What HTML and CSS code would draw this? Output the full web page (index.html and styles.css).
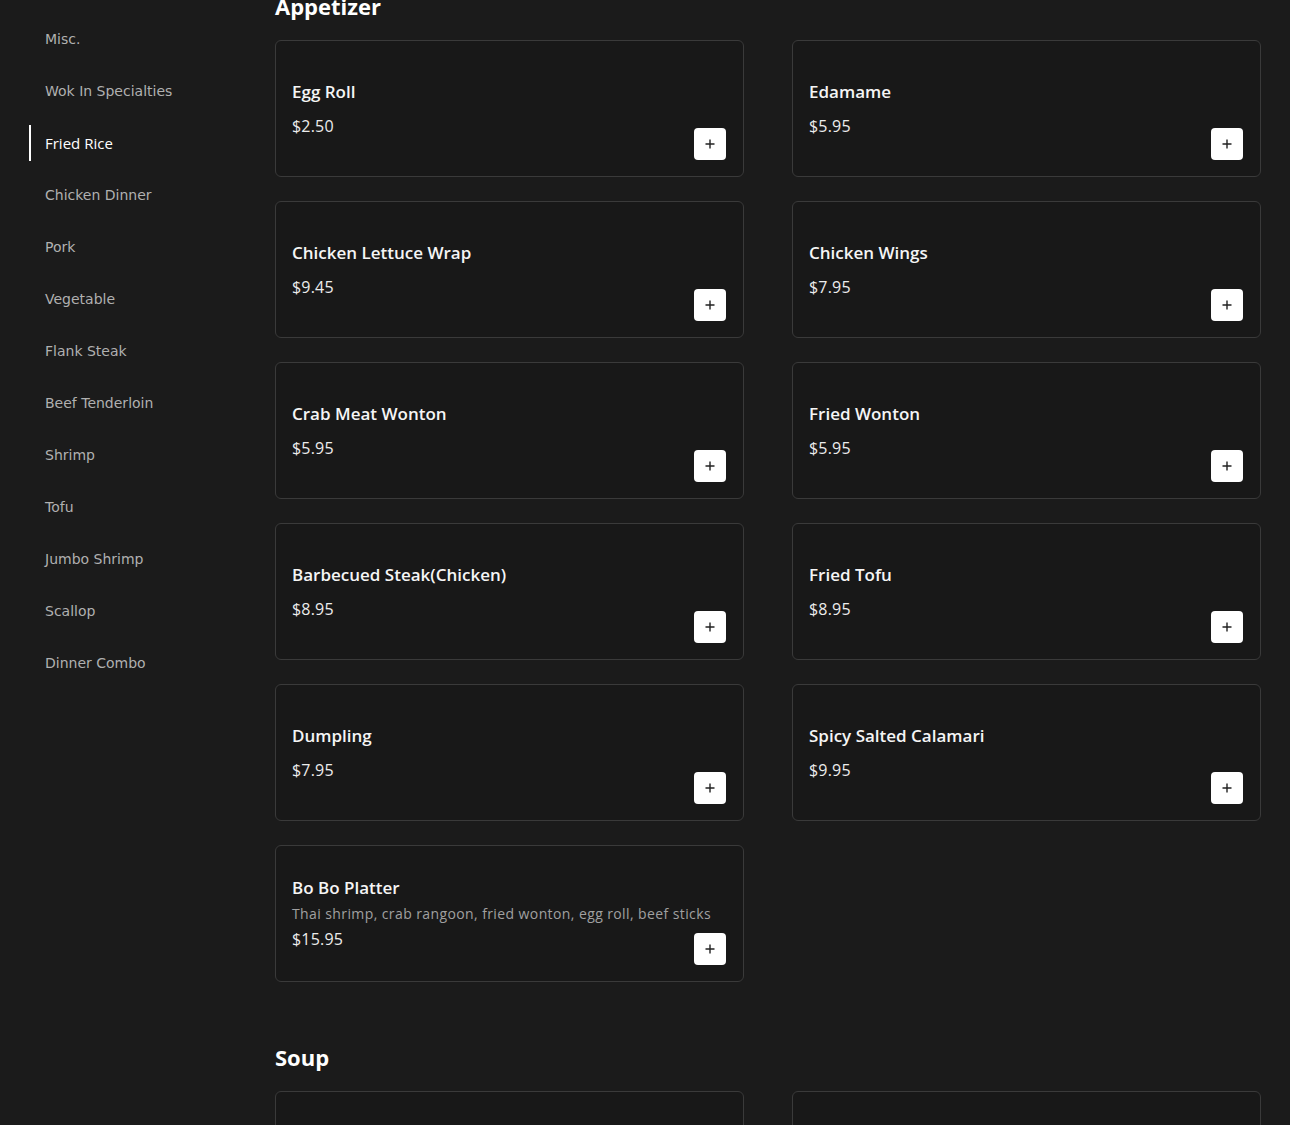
FILE: index.html
```html
<!DOCTYPE html>
<html lang="en">
<head>
  <meta charset="UTF-8">
  <title>Menu</title>
  <meta name="viewport" content="width=device-width, initial-scale=1.0">
  <link rel="stylesheet" href="styles.css">
</head>
<body>
  <div class="layout">
    <aside class="sidebar">
      <ul class="cats">
        <li><a href="#">Misc.</a></li>
        <li><a href="#">Wok In Specialties</a></li>
        <li class="active"><a href="#">Fried Rice</a></li>
        <li><a href="#">Chicken Dinner</a></li>
        <li><a href="#">Pork</a></li>
        <li><a href="#">Vegetable</a></li>
        <li><a href="#">Flank Steak</a></li>
        <li><a href="#">Beef Tenderloin</a></li>
        <li><a href="#">Shrimp</a></li>
        <li><a href="#">Tofu</a></li>
        <li><a href="#">Jumbo Shrimp</a></li>
        <li><a href="#">Scallop</a></li>
        <li><a href="#">Dinner Combo</a></li>
      </ul>
    </aside>

    <main class="menu">
      <section class="section">
        <h2>Appetizer</h2>
        <div class="grid">
          <div class="card">
            <div class="info"><h3>Egg Roll</h3><p class="price">$2.50</p></div>
            <button class="add"><svg viewBox="0 0 12 12" width="12" height="12"><path d="M6 1.5v9M1.5 6h9"/></svg></button>
          </div>
          <div class="card">
            <div class="info"><h3>Edamame</h3><p class="price">$5.95</p></div>
            <button class="add"><svg viewBox="0 0 12 12" width="12" height="12"><path d="M6 1.5v9M1.5 6h9"/></svg></button>
          </div>
          <div class="card">
            <div class="info"><h3>Chicken Lettuce Wrap</h3><p class="price">$9.45</p></div>
            <button class="add"><svg viewBox="0 0 12 12" width="12" height="12"><path d="M6 1.5v9M1.5 6h9"/></svg></button>
          </div>
          <div class="card">
            <div class="info"><h3>Chicken Wings</h3><p class="price">$7.95</p></div>
            <button class="add"><svg viewBox="0 0 12 12" width="12" height="12"><path d="M6 1.5v9M1.5 6h9"/></svg></button>
          </div>
          <div class="card">
            <div class="info"><h3>Crab Meat Wonton</h3><p class="price">$5.95</p></div>
            <button class="add"><svg viewBox="0 0 12 12" width="12" height="12"><path d="M6 1.5v9M1.5 6h9"/></svg></button>
          </div>
          <div class="card">
            <div class="info"><h3>Fried Wonton</h3><p class="price">$5.95</p></div>
            <button class="add"><svg viewBox="0 0 12 12" width="12" height="12"><path d="M6 1.5v9M1.5 6h9"/></svg></button>
          </div>
          <div class="card">
            <div class="info"><h3>Barbecued Steak(Chicken)</h3><p class="price">$8.95</p></div>
            <button class="add"><svg viewBox="0 0 12 12" width="12" height="12"><path d="M6 1.5v9M1.5 6h9"/></svg></button>
          </div>
          <div class="card">
            <div class="info"><h3>Fried Tofu</h3><p class="price">$8.95</p></div>
            <button class="add"><svg viewBox="0 0 12 12" width="12" height="12"><path d="M6 1.5v9M1.5 6h9"/></svg></button>
          </div>
          <div class="card">
            <div class="info"><h3>Dumpling</h3><p class="price">$7.95</p></div>
            <button class="add"><svg viewBox="0 0 12 12" width="12" height="12"><path d="M6 1.5v9M1.5 6h9"/></svg></button>
          </div>
          <div class="card">
            <div class="info"><h3>Spicy Salted Calamari</h3><p class="price">$9.95</p></div>
            <button class="add"><svg viewBox="0 0 12 12" width="12" height="12"><path d="M6 1.5v9M1.5 6h9"/></svg></button>
          </div>
          <div class="card">
            <div class="info"><h3>Bo Bo Platter</h3><p class="desc">Thai shrimp, crab rangoon, fried wonton, egg roll, beef sticks</p><p class="price">$15.95</p></div>
            <button class="add"><svg viewBox="0 0 12 12" width="12" height="12"><path d="M6 1.5v9M1.5 6h9"/></svg></button>
          </div>
        </div>
      </section>

      <section class="section">
        <h2>Soup</h2>
        <div class="grid">
          <div class="card">
            <div class="info"><h3>Wonton Soup</h3><p class="price">$3.95</p></div>
            <button class="add"><svg viewBox="0 0 12 12" width="12" height="12"><path d="M6 1.5v9M1.5 6h9"/></svg></button>
          </div>
          <div class="card">
            <div class="info"><h3>Egg Drop Soup</h3><p class="price">$3.95</p></div>
            <button class="add"><svg viewBox="0 0 12 12" width="12" height="12"><path d="M6 1.5v9M1.5 6h9"/></svg></button>
          </div>
        </div>
      </section>
    </main>
  </div>
</body>
</html>
```

FILE: styles.css
```css
body { margin: 0; background: #1b1b1b; color: #f2f2f2; font-family: "Open Sans", "Noto Sans", sans-serif; }
.layout { display: flex; align-items: flex-start; }

.sidebar { width: 275px; flex: none; padding: 21px 0 0 29px; box-sizing: border-box; }
.cats { list-style: none; margin: 0; padding: 0; display: flex; flex-direction: column; gap: 16px; }
.cats li { height: 36px; display: flex; align-items: center; padding-left: 16px; }
.cats a { font-family: "DejaVu Sans", sans-serif; font-size: 14px; color: #b0b0b0; text-decoration: none; }
.cats li.active { border-left: 2px solid #fff; padding-left: 14px; }
.cats li.active a { font-family: "Open Sans", sans-serif; font-size: 15px; font-weight: 500; color: #fff; }

.menu { flex: 1; padding-right: 29px; margin-top: -8px; }
.section + .section { margin-top: 61px; }
.section h2 { margin: 0 0 20px; font-size: 22px; line-height: 28px; font-weight: 700; color: #fff; }

.grid { display: grid; grid-template-columns: 1fr 1fr; column-gap: 48px; row-gap: 24px; }
.card { height: 137px; box-sizing: border-box; border: 1px solid #3a3a3a; border-radius: 6px; background: #181818; padding: 16px 17px 16px 16px; display: grid; grid-template: 1fr / 1fr; }
.info { grid-area: 1 / 1; display: flex; flex-direction: column; justify-content: center; }
.info h3 { margin: 0 0 4px; font-size: 17px; line-height: 24px; font-weight: 600; color: #f5f5f5; }
.desc { margin: 0 0 -3px; font-size: 14px; line-height: 20px; letter-spacing: 0.4px; color: #a0a0a0; }
.price { margin: 6px 0 0; font-size: 16px; line-height: 24px; letter-spacing: 0.2px; color: #ececec; }

.add { grid-area: 1 / 1; justify-self: end; align-self: end; width: 32px; height: 32px; border: none; border-radius: 4px; background: #fff; padding: 0; display: flex; align-items: center; justify-content: center; cursor: pointer; }
.add svg { fill: none; stroke: #222; stroke-width: 1.4; }
```
